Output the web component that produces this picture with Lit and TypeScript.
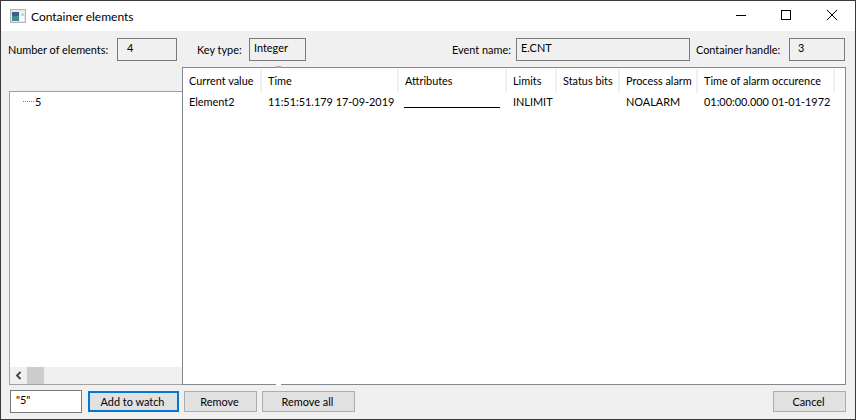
import { LitElement, html, css, svg } from "lit";
import { customElement } from "lit/decorators.js";

const COLS = [
  { t: "Current value", w: 79, v: "Element2" },
  { t: "Time", w: 137, v: "11:51:51.179 17-09-2019" },
  { t: "Attributes", w: 108, v: "" },
  { t: "Limits", w: 50, v: "INLIMIT" },
  { t: "Status bits", w: 63, v: "" },
  { t: "Process alarm", w: 78, v: "NOALARM" },
  { t: "Time of alarm occurence", w: 137, v: "01:00:00.000 01-01-1972" },
];

@customElement("app-root")
export class AppRoot extends LitElement {
  static styles = css`
    :host { display: block; width: 856px; height: 420px; font-family: Lato, "Noto Sans", sans-serif; font-size: 10.9px; color: #000; }
    * { box-sizing: border-box; }
    .win { width: 856px; height: 420px; border: 1px solid #3a3a3a; background: #f0f0f0; display: flex; flex-direction: column; }
    .title { height: 30px; background: #fff; display: flex; align-items: center; padding-left: 9px; flex: none; }
    .title .cap { margin-left: 5px; font-size: 12px; }
    .ctl { margin-left: auto; display: flex; }
    .ctl svg { display: block; width: 46px; height: 30px; }
    .top { height: 23px; margin-top: 7px; display: flex; align-items: center; flex: none; }
    .lbl { white-space: nowrap; }
    .l-num { margin-left: 7px; width: 109px; }
    .l-key { margin-left: 20px; width: 52px; }
    .l-evt { margin-left: 146px; width: 64px; }
    .l-hdl { margin-left: 6px; width: 93px; }
    .field { height: 23px; border: 1px solid #7a7a7a; background: #f0f0f0; padding: 1px 0 0 4px; flex: none; line-height: 16px; }
    .f-num { width: 60px; padding-left: 9px; }
    .f-key { width: 57px; }
    .f-evt { width: 174px; }
    .f-hdl { width: 56px; padding-left: 8px; }
    .mid { flex: 1; display: flex; margin: 6px 9px 0 8px; min-height: 0; position: relative; }
    .tree { width: 173px; margin-top: 24px; background: #fff; border: 1px solid #a0a0a0; border-right: none; display: flex; flex-direction: column; flex: none; }
    .tree-body { flex: 1; padding: 1px 0 0 13px; }
    .node { display: flex; align-items: center; height: 16px; }
    .dots { width: 11px; border-top: 1px dotted #808080; margin-right: 1px; }
    .hbar { height: 17px; background: #f0f0f0; display: flex; align-items: center; flex: none; }
    .arrow { width: 17px; height: 17px; display: flex; align-items: center; justify-content: center; }
    .thumb { width: 17px; height: 17px; background: #cdcdcd; }
    .list { flex: 1; background: #fff; border: 1px solid #828790; min-width: 0; }
    .hdr { display: flex; height: 25px; padding-top: 1px; }
    .hdr div { border-right: 2px solid #f0f0f0; padding: 5px 0 0 6px; white-space: nowrap; flex: none; height: 24px; }
    .row { display: flex; height: 18px; }
    .row div { padding: 2px 0 0 6px; white-space: nowrap; flex: none; position: relative; }
    .ul { position: absolute; left: 5px; top: 14px; width: 96px; height: 1px; background: #000; }
    .grip { position: absolute; left: 267px; width: 5px; height: 2px; }
    .grip.a { top: -1px; background: #a8a8a8; }
    .grip.b { bottom: -1px; background: #fff; }
    .bot { height: 23px; margin: 5px 9px 6px 9px; display: flex; align-items: center; flex: none; }
    .input { width: 72px; height: 23px; background: #fff; border: 1px solid #7a7a7a; padding: 2px 0 0 5px; flex: none; }
    button { font: inherit; height: 21px; background: #e1e1e1; border: 1px solid #adadad; color: #000; padding: 0 2px 0 0; flex: none; }
    button.def { border: 2px solid #0078d7; width: 91px; margin-left: 6px; }
    .b-rm { width: 73px; margin-left: 5px; }
    .b-all { width: 93px; margin-left: 5px; }
    .b-cancel { width: 73px; margin-left: auto; }
  `;

  render() {
    return html`<div class="win">
      <div class="title">
        <svg width="16" height="14" viewBox="0 0 16 14">
          <rect x="0.5" y="0.5" width="15" height="13" fill="#e8e8e8" stroke="#b4b4b4"/>
          <rect x="2" y="3" width="7" height="9" fill="#3f8f92"/>
          <rect x="2" y="3" width="7" height="4" fill="#3d5f86"/>
          <rect x="10" y="3" width="4" height="9" fill="#fff"/>
          <rect x="11" y="4" width="3" height="3" fill="#c4dcc8"/>
        </svg>
        <span class="cap">Container elements</span>
        <div class="ctl">
          <svg viewBox="0 0 46 30">${svg`<path d="M19 14.5h10" stroke="#000" fill="none"/>`}</svg>
          <svg viewBox="0 0 46 30">${svg`<rect x="18.5" y="9.5" width="9" height="9" stroke="#000" fill="none"/>`}</svg>
          <svg viewBox="0 0 46 30">${svg`<path d="M18 9l10 10M28 9l-10 10" stroke="#000" fill="none"/>`}</svg>
        </div>
      </div>
      <div class="top">
        <span class="lbl l-num">Number of elements:</span>
        <div class="field f-num">4</div>
        <span class="lbl l-key">Key type:</span>
        <div class="field f-key">Integer</div>
        <span class="lbl l-evt">Event name:</span>
        <div class="field f-evt">E.CNT</div>
        <span class="lbl l-hdl">Container handle:</span>
        <div class="field f-hdl">3</div>
      </div>
      <div class="mid">
        <div class="tree">
          <div class="tree-body"><div class="node"><span class="dots"></span><span>5</span></div></div>
          <div class="hbar">
            <div class="arrow"><svg width="7" height="9" viewBox="0 0 7 9"><path d="M5.5 1L2 4.5 5.5 8" stroke="#404040" stroke-width="1.8" fill="none"/></svg></div>
            <div class="thumb"></div>
          </div>
        </div>
        <div class="list">
          <div class="hdr">${COLS.map((c) => html`<div style="width:${c.w}px">${c.t}</div>`)}</div>
          <div class="row">${COLS.map((c, i) => html`<div style="width:${c.w}px">${c.v}${i === 2 ? html`<span class="ul"></span>` : ""}</div>`)}</div>
        </div>
        <div class="grip a"></div>
        <div class="grip b"></div>
      </div>
      <div class="bot">
        <div class="input">"5"</div>
        <button class="def">Add to watch</button>
        <button class="b-rm">Remove</button>
        <button class="b-all">Remove all</button>
        <button class="b-cancel">Cancel</button>
      </div>
    </div>`;
  }
}
